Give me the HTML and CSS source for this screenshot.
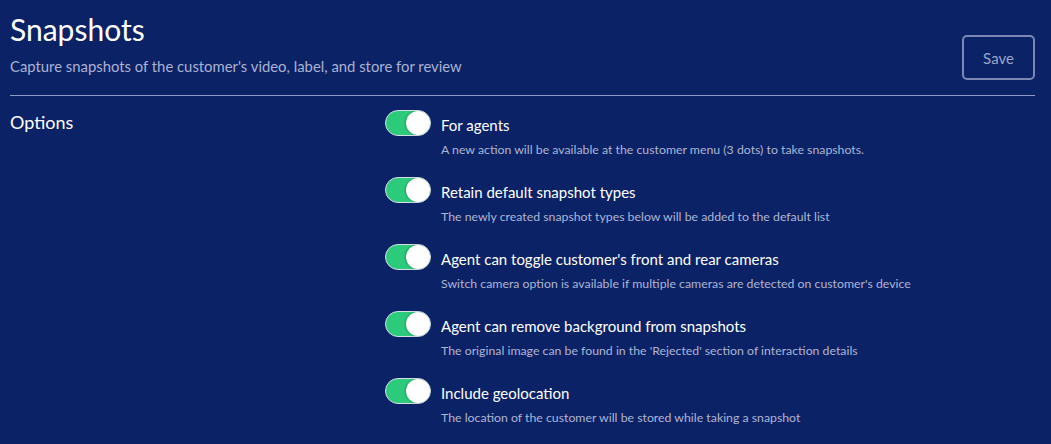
FILE: index.html
```html
<!DOCTYPE html>
<html>
<head>
<meta charset="utf-8">
<link rel="stylesheet" href="styles.css">
</head>
<body>
<div class="page">
  <header class="header">
    <div class="heading">
      <h1 class="title">Snapshots</h1>
      <p class="subtitle">Capture snapshots of the customer's video, label, and store for review</p>
    </div>
    <button class="save">Save</button>
  </header>
  <hr class="divider">
  <section class="options">
    <div class="options-label">Options</div>
    <div class="option-list">
      <div class="option">
        <span class="toggle"><span class="knob"></span></span>
        <div class="option-text">
          <div class="option-title">For agents</div>
          <div class="option-desc">A new action will be available at the customer menu (3 dots) to take snapshots.</div>
        </div>
      </div>
      <div class="option">
        <span class="toggle"><span class="knob"></span></span>
        <div class="option-text">
          <div class="option-title">Retain default snapshot types</div>
          <div class="option-desc">The newly created snapshot types below will be added to the default list</div>
        </div>
      </div>
      <div class="option">
        <span class="toggle"><span class="knob"></span></span>
        <div class="option-text">
          <div class="option-title">Agent can toggle customer's front and rear cameras</div>
          <div class="option-desc">Switch camera option is available if multiple cameras are detected on customer's device</div>
        </div>
      </div>
      <div class="option">
        <span class="toggle"><span class="knob"></span></span>
        <div class="option-text">
          <div class="option-title">Agent can remove background from snapshots</div>
          <div class="option-desc">The original image can be found in the 'Rejected' section of interaction details</div>
        </div>
      </div>
      <div class="option">
        <span class="toggle"><span class="knob"></span></span>
        <div class="option-text">
          <div class="option-title">Include geolocation</div>
          <div class="option-desc">The location of the customer will be stored while taking a snapshot</div>
        </div>
      </div>
    </div>
  </section>
</div>
</body>
</html>
```

FILE: styles.css
```css
html, body {
  margin: 0;
  padding: 0;
  background: #0b2266;
  height: 100%;
}
body {
  font-family: Lato, "Open Sans", sans-serif;
  color: #ffffff;
  overflow: hidden;
}
.page {
  padding: 0 16px 0 10px;
}
.header {
  display: flex;
  justify-content: space-between;
  align-items: flex-start;
}
.title {
  margin: 0;
  padding-top: 11px;
  font-size: 30px;
  font-weight: 400;
  line-height: 36px;
  color: #ffffff;
}
.subtitle {
  margin: 9px 0 0 0;
  font-size: 14.85px;
  line-height: 20px;
  color: #aab3d3;
}
.save {
  margin-top: 35px;
  width: 73px;
  height: 45px;
  background: transparent;
  border: 2px solid #7c88b3;
  border-radius: 5px;
  color: #9ca6c9;
  font-family: Lato, sans-serif;
  font-size: 15px;
  padding: 0;
}
.divider {
  margin: 15px 0 0 0;
  border: 0;
  height: 1px;
  background: #8e9bc9;
}
.options {
  display: flex;
  padding-top: 14px;
}
.options-label {
  width: 375px;
  flex: none;
  font-size: 18px;
  line-height: 24px;
}
.option-list {
  display: flex;
  flex-direction: column;
  gap: 18px;
}
.option {
  display: flex;
  gap: 10px;
  align-items: flex-start;
}
.toggle {
  flex: none;
  width: 46px;
  height: 26px;
  border-radius: 13px;
  background: #2ccb7b;
  box-sizing: border-box;
  border: 1px solid #d9dde6;
  display: flex;
  justify-content: flex-end;
  align-items: center;
  padding: 0;
}
.knob {
  width: 24px;
  height: 24px;
  border-radius: 50%;
  background: #ffffff;
  box-shadow: -1px 0 2px rgba(0, 0, 0, 0.25);
}
.option-title {
  padding-top: 2px;
  font-size: 15px;
  line-height: 26px;
  color: #ffffff;
}
.option-desc {
  margin-top: 3px;
  font-size: 12.3px;
  line-height: 18px;
  color: #aeb6d4;
}
```
